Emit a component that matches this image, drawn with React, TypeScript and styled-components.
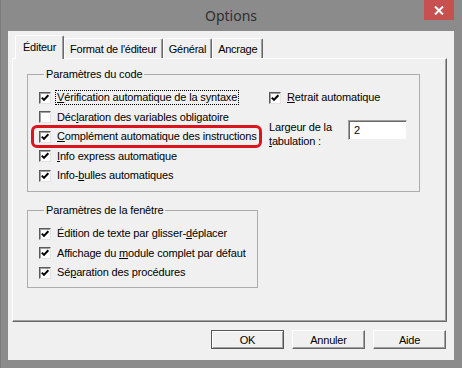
import React from 'react';
import styled, { createGlobalStyle } from 'styled-components';

const GlobalStyle = createGlobalStyle`
  html, body {
    margin: 0;
    padding: 0;
  }
  body {
    width: 462px;
    height: 368px;
    overflow: hidden;
    font-family: "Liberation Sans", Arial, sans-serif;
    font-size: 11px;
    letter-spacing: -0.15px;
    color: #000;
  }
`;

const Window = styled.div`
  width: 462px;
  height: 368px;
  box-sizing: border-box;
  background: #8b8b8b;
  border-left: 1px solid #7c7c7c;
  padding: 0 8px 8px 7px;
  display: flex;
  flex-direction: column;
`;

const TitleBar = styled.div`
  height: 31px;
  flex: none;
  display: grid;
  grid-template-columns: 30px 1fr 30px;
  align-items: start;
`;

const Title = styled.div`
  grid-column: 2;
  text-align: center;
  font-family: "Noto Sans", "Open Sans", sans-serif;
  font-size: 14px;
  letter-spacing: 0;
  line-height: 31px;
  color: #2f2f2f;
`;

const CloseButton = styled.div`
  grid-column: 3;
  height: 20px;
  background: #c75050;
  display: flex;
  align-items: center;
  justify-content: center;
`;

const Client = styled.div`
  flex: 1;
  background: #f0f0f0;
  padding: 5px 7px 10px 4px;
  display: flex;
  flex-direction: column;
`;

const TabStrip = styled.div`
  height: 23px;
  display: flex;
  align-items: flex-end;
  padding-left: 3px;
  margin-bottom: -1px;
`;

const Tab = styled.div<{ $active?: boolean }>`
  position: relative;
  z-index: ${(p) => (p.$active ? 2 : 0)};
  height: ${(p) => (p.$active ? '24px' : '20px')};
  box-sizing: border-box;
  padding: 0 ${(p) => (p.$active ? '7px' : '5px')};
  margin-bottom: ${(p) => (p.$active ? '0' : '1px')};
  background: #f0f0f0;
  border: 1px solid #fff;
  border-bottom: none;
  border-right-color: #696969;
  border-radius: 2px 2px 0 0;
  box-shadow: inset -1px 0 #a0a0a0;
  display: flex;
  align-items: center;
  padding-bottom: ${(p) => (p.$active ? '2px' : '0')};
  letter-spacing: -0.25px;
  white-space: nowrap;
`;

const Panel = styled.div`
  height: 264px;
  box-sizing: border-box;
  border: 1px solid #fff;
  border-right-color: #696969;
  border-bottom-color: #696969;
  box-shadow: inset -1px -1px #a0a0a0;
  padding: 9px 0 0 14px;
  display: flex;
  flex-direction: column;
  gap: 12px;
`;

const GroupBox = styled.fieldset<{ $w: number; $h: number }>`
  margin: 0;
  box-sizing: border-box;
  width: ${(p) => p.$w}px;
  height: ${(p) => p.$h}px;
  border: 1px solid #acacac;
  border-radius: 0;
  padding: 7px 0 0 11px;
  min-width: 0;
`;

const Legend = styled.legend`
  margin-left: 5px;
  padding: 0 2px;
  line-height: 13px;
`;

const Columns = styled.div`
  display: grid;
  grid-template-columns: 230px 1fr;
`;

const Column = styled.div`
  display: flex;
  flex-direction: column;
`;

const Row = styled.label<{ $marked?: boolean }>`
  position: relative;
  height: 19.5px;
  display: flex;
  align-items: center;
  gap: 6px;
  white-space: nowrap;

  ${(p) =>
    p.$marked &&
    `
    &::after {
      content: '';
      position: absolute;
      left: -8px;
      right: 7px;
      top: -2px;
      bottom: -1px;
      border: 3.5px solid #dc141c;
      border-radius: 6px;
    }
  `}
`;

const Box = styled.span`
  width: 12px;
  height: 12px;
  flex: none;
  box-sizing: border-box;
  background: #fff;
  border: 1px solid;
  border-color: #5a5a5a #e3e3e3 #e3e3e3 #5a5a5a;
  box-shadow: inset 1px 1px #a0a0a0;
  display: flex;
  align-items: center;
  justify-content: center;
`;

const Text = styled.span<{ $focus?: boolean }>`
  line-height: 13px;
  ${(p) => p.$focus && 'outline: 1px dotted #000; outline-offset: 0; padding: 0 1px; margin-left: -1px;'}
`;

const TabWidth = styled.div`
  margin-top: 12px;
  display: flex;
  align-items: flex-start;
`;

const TabWidthLabel = styled.div`
  width: 79px;
  line-height: 14px;
`;

const NumberField = styled.div`
  width: 59px;
  height: 20px;
  box-sizing: border-box;
  background: #fff;
  border: 1px solid;
  border-color: #a0a0a0 #f0f0f0 #f0f0f0 #a0a0a0;
  box-shadow: inset 1px 1px #696969;
  padding: 3px 0 0 5px;
  line-height: 13px;
`;

const ButtonRow = styled.div`
  margin-top: 8px;
  display: flex;
  justify-content: flex-end;
  gap: 8px;
  padding-right: 1px;
`;

const Button = styled.div<{ $default?: boolean }>`
  width: 73px;
  height: 19px;
  box-sizing: border-box;
  background: #f0f0f0;
  border: 1px solid;
  border-color: ${(p) => (p.$default ? '#555' : '#fff #696969 #696969 #fff')};
  box-shadow: ${(p) => (p.$default ? 'inset 1px 1px #fff, inset -1px -1px #a0a0a0' : 'inset -1px -1px #a0a0a0')};
  display: flex;
  align-items: center;
  justify-content: center;
  letter-spacing: -0.2px;
`;

function Check({ on }: { on: boolean }) {
  return (
    <Box>
      {on && (
        <svg width="8" height="8" viewBox="0 0 8 8">
          <path d="M0.8 3.6 L3 5.9 L7.3 1.2" fill="none" stroke="#000" strokeWidth="2" />
        </svg>
      )}
    </Box>
  );
}

export default function App() {
  return (
    <>
      <GlobalStyle />
      <Window>
        <TitleBar>
          <Title>Options</Title>
          <CloseButton>
            <svg width="10" height="9" viewBox="0 0 10 9">
              <path d="M1 0.5 L9 8.5 M9 0.5 L1 8.5" stroke="#fff" strokeWidth="2" />
            </svg>
          </CloseButton>
        </TitleBar>
        <Client>
          <TabStrip>
            <Tab $active>Éditeur</Tab>
            <Tab>Format de l&apos;éditeur</Tab>
            <Tab>Général</Tab>
            <Tab>Ancrage</Tab>
          </TabStrip>
          <Panel>
            <GroupBox $w={393} $h={124}>
              <Legend>Paramètres du code</Legend>
              <Columns>
                <Column>
                  <Row>
                    <Check on />
                    <Text $focus>
                      <u>V</u>érification automatique de la syntaxe
                    </Text>
                  </Row>
                  <Row>
                    <Check on={false} />
                    <Text>
                      Déc<u>l</u>aration des variables obligatoire
                    </Text>
                  </Row>
                  <Row $marked>
                    <Check on />
                    <Text>
                      <u>C</u>omplément automatique des instructions
                    </Text>
                  </Row>
                  <Row>
                    <Check on />
                    <Text>
                      <u>I</u>nfo express automatique
                    </Text>
                  </Row>
                  <Row>
                    <Check on />
                    <Text>
                      Info-<u>b</u>ulles automatiques
                    </Text>
                  </Row>
                </Column>
                <Column>
                  <Row>
                    <Check on />
                    <Text>
                      <u>R</u>etrait automatique
                    </Text>
                  </Row>
                  <TabWidth>
                    <TabWidthLabel>
                      Largeur de la
                      <br />
                      <u>t</u>abulation :
                    </TabWidthLabel>
                    <NumberField>2</NumberField>
                  </TabWidth>
                </Column>
              </Columns>
            </GroupBox>
            <GroupBox $w={231} $h={84}>
              <Legend>Paramètres de la fenêtre</Legend>
              <Column>
                <Row>
                  <Check on />
                  <Text>
                    Édition de texte par glisser-<u>d</u>éplacer
                  </Text>
                </Row>
                <Row>
                  <Check on />
                  <Text>
                    Affichage du <u>m</u>odule complet par défaut
                  </Text>
                </Row>
                <Row>
                  <Check on />
                  <Text>
                    Sé<u>p</u>aration des procédures
                  </Text>
                </Row>
              </Column>
            </GroupBox>
          </Panel>
          <ButtonRow>
            <Button $default>OK</Button>
            <Button>Annuler</Button>
            <Button>Aide</Button>
          </ButtonRow>
        </Client>
      </Window>
    </>
  );
}
